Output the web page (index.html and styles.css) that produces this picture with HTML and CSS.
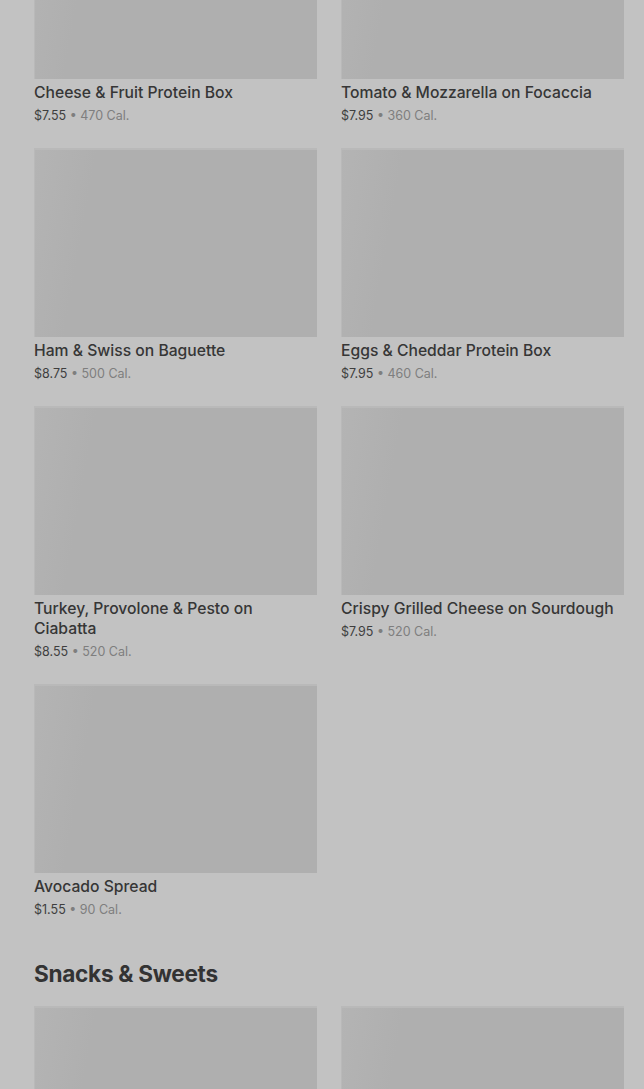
FILE: index.html
```html
<!DOCTYPE html>
<html lang="en">
<head>
  <meta charset="UTF-8" />
  <meta name="viewport" content="width=device-width, initial-scale=1.0"/>
  <title>Menu</title>
  <link rel="stylesheet" href="styles.css">
</head>
<body>

  <!-- Menu (scrolled, under the grey overlay) -->
  <main class="menu">

    <section class="category">
      <div class="item-grid">
        <div class="item">
          <div class="item-img"></div>
          <h3 class="item-name">Cheese &amp; Fruit Protein Box</h3>
          <p class="item-meta"><span class="price">$7.55</span> • 470 Cal.</p>
        </div>
        <div class="item">
          <div class="item-img"></div>
          <h3 class="item-name">Tomato &amp; Mozzarella on Focaccia</h3>
          <p class="item-meta"><span class="price">$7.95</span> • 360 Cal.</p>
        </div>
        <div class="item">
          <div class="item-img"></div>
          <h3 class="item-name">Ham &amp; Swiss on Baguette</h3>
          <p class="item-meta"><span class="price">$8.75</span> • 500 Cal.</p>
        </div>
        <div class="item">
          <div class="item-img"></div>
          <h3 class="item-name">Eggs &amp; Cheddar Protein Box</h3>
          <p class="item-meta"><span class="price">$7.95</span> • 460 Cal.</p>
        </div>
        <div class="item">
          <div class="item-img"></div>
          <h3 class="item-name">Turkey, Provolone &amp; Pesto on Ciabatta</h3>
          <p class="item-meta"><span class="price">$8.55</span> • 520 Cal.</p>
        </div>
        <div class="item">
          <div class="item-img"></div>
          <h3 class="item-name">Crispy Grilled Cheese on Sourdough</h3>
          <p class="item-meta"><span class="price">$7.95</span> • 520 Cal.</p>
        </div>
        <div class="item">
          <div class="item-img"></div>
          <h3 class="item-name">Avocado Spread</h3>
          <p class="item-meta"><span class="price">$1.55</span> • 90 Cal.</p>
        </div>
      </div>
    </section>

    <section class="category">
      <h2 class="category-title">Snacks &amp; Sweets</h2>
      <div class="item-grid">
        <div class="item">
          <div class="item-img"></div>
        </div>
        <div class="item">
          <div class="item-img"></div>
        </div>
      </div>
    </section>

  </main>

</body>
</html>
```

FILE: styles.css
```css
body {
  margin: 0;
  font-family: Inter, "Noto Sans", sans-serif;
  background: #c2c2c2;
  color: #333;
  overflow: hidden;
  height: 1089px;
}

.menu {
  padding: 0 20px 0 34px;
  margin-top: -110px; /* page is scrolled */
}

.category-title {
  font-size: 22.6px;
  line-height: 32px;
  font-weight: 700;
  letter-spacing: -0.3px;
  color: #333;
  margin: 38px 0 16px;
}

.item-grid {
  display: grid;
  grid-template-columns: 283px 283px;
  column-gap: 24px;
  row-gap: 22px;
}

.item-img {
  height: 189px;
  background: linear-gradient(100deg, #b4b4b4 0%, #afafaf 20%, #afafaf 100%);
  box-shadow: inset 1px 2px 0 #b9b9b9;
}

.item-name {
  font-size: 15.7px;
  line-height: 20px;
  font-weight: 500;
  color: #363636;
  margin: 4px 0 0;
}

.item-meta {
  font-size: 12.5px;
  line-height: 20px;
  color: #7e7e7e;
  margin: 3px 0 0;
}

.price {
  color: #3e3e3e;
}
```
